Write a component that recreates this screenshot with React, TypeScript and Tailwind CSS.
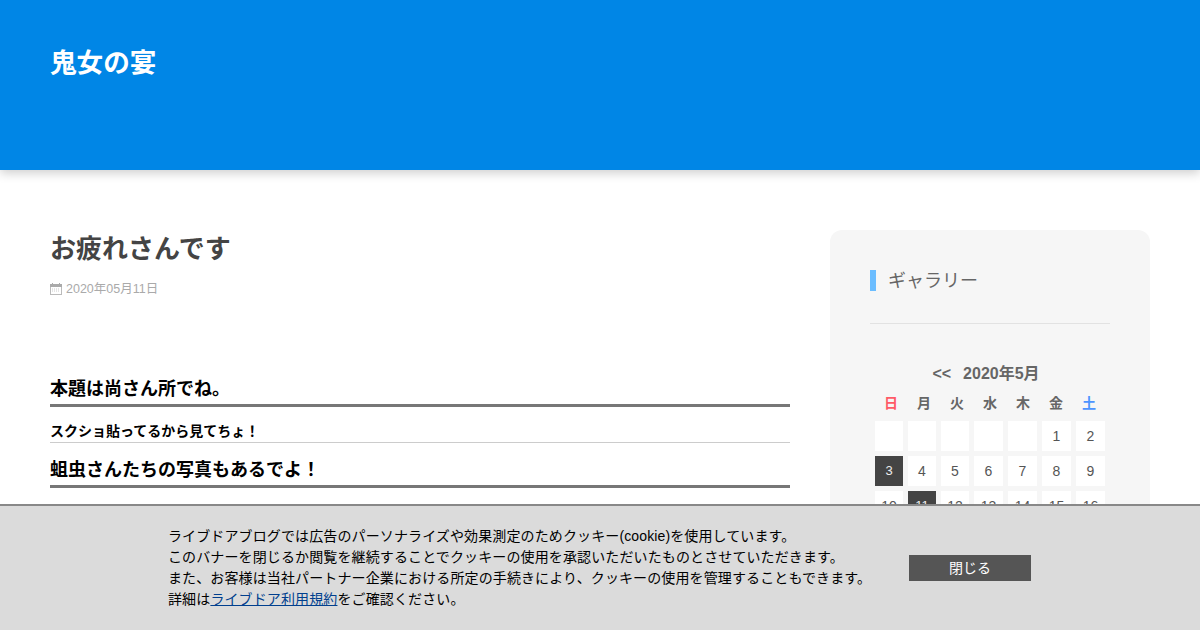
import React from 'react';

const weekdays = ['日', '月', '火', '水', '木', '金', '土'];
const days: (number | null)[] = [null, null, null, null, null, 1, 2, 3, 4, 5, 6, 7, 8, 9, 10, 11, 12, 13, 14, 15, 16];
const linkedDays = [3, 11];

const CalendarIcon = () => (
  <svg width="12" height="12" viewBox="0 0 12 12" className="shrink-0">
    <rect x="0.5" y="1.5" width="11" height="10" fill="none" stroke="#bbb" />
    <rect x="0" y="1" width="12" height="3" fill="#aaa" />
    <rect x="2" y="0" width="1" height="2" fill="#aaa" />
    <rect x="9" y="0" width="1" height="2" fill="#aaa" />
    <path d="M2 6h8M2 8h8" stroke="#ccc" strokeDasharray="1 1" />
  </svg>
);

const App: React.FC = () => {
  return (
    <div className="h-[630px] overflow-hidden bg-white font-['Liberation_Sans','Noto_Sans_CJK_JP',sans-serif] text-[#444]">
      <header className="h-[170px] bg-[#0086e6] px-[50px] pt-[45px] shadow-[0_3px_10px_rgba(0,0,0,0.2)]">
        <h1 className="text-[26.6px] leading-[36px] font-bold text-white">鬼女の宴</h1>
      </header>

      <div className="flex justify-between px-[50px] pt-[60px]">
        <main className="w-[740px] pt-px">
          <h2 className="text-[26px] leading-[36px] font-bold text-[#444]">お疲れさんです</h2>
          <div className="mt-[13px] flex items-center gap-[4px] text-[12.5px] leading-[18px] text-[#aaa]">
            <CalendarIcon />
            <span>2020年05月11日</span>
          </div>

          <div className="mt-[76px] text-black">
            <h3 className="border-b-[3px] border-[#777] text-[18px] leading-[30px] font-bold">本題は尚さん所でね。</h3>
            <h4 className="mt-[13px] border-b border-[#ccc] text-[14px] leading-[22px] font-bold">スクショ貼ってるから見てちょ！</h4>
            <h3 className="mt-[13px] border-b-[3px] border-[#777] text-[18px] leading-[29px] font-bold">蛆虫さんたちの写真もあるでよ！</h3>
          </div>
        </main>

        <aside className="w-[320px] rounded-[12px] bg-[#f6f6f6] px-[40px] pt-[40px] pb-[40px]">
          <h2 className="h-[21px] border-l-[6px] border-[#6bbdff] pt-px pl-[12px] text-[18px] leading-[21px] font-normal text-[#666]">ギャラリー</h2>
          <div className="mt-[32px] h-px bg-[#e2e2e2]" />

          <div className="mt-[39px] px-[5px]">
            <div className="flex justify-center gap-[12px] pr-[8px] text-[16px] leading-[22px] font-bold text-[#666]">
              <span>&lt;&lt;</span>
              <span>2020年5月</span>
            </div>
            <div className="mt-[8px] grid grid-cols-[repeat(7,33px)] justify-center text-center text-[14px] leading-[20px] font-bold text-[#666]">
              {weekdays.map((day, i) => (
                <div key={day} className={i === 0 ? 'text-[#ff5a66]' : i === 6 ? 'text-[#4d94ff]' : ''}>
                  {day}
                </div>
              ))}
            </div>
            <div className="mt-[8px] grid grid-cols-[28px_28px_28px_29px_29px_29px_29px] gap-[5px] text-center text-[14px] leading-[30px] text-[#555]">
              {days.map((d, i) => (
                <div
                  key={i}
                  className={d !== null && linkedDays.includes(d) ? 'h-[30px] bg-[#444] text-[13px] text-[#eee]' : 'h-[30px] bg-white'}
                >
                  {d}
                </div>
              ))}
            </div>
          </div>
        </aside>
      </div>

      <div className="fixed right-0 bottom-0 left-0 flex h-[126px] border-t-2 border-[#888] bg-[#dbdbdb] pl-[168px] text-black">
        <p className="mt-[20px] w-[711px] text-[14px] leading-[21px] tracking-[0.12px]">
          ライブドアブログでは広告のパーソナライズや効果測定のためクッキー(cookie)を使用しています。
          <br />
          このバナーを閉じるか閲覧を継続することでクッキーの使用を承認いただいたものとさせていただきます。
          <br />
          また、お客様は当社パートナー企業における所定の手続きにより、クッキーの使用を管理することもできます。
          <br />
          詳細は
          <a className="text-[#003f8e] underline">ライブドア利用規約</a>
          をご確認ください。
        </p>
        <button className="mt-[49px] ml-[30px] h-[26px] w-[122px] bg-[#555] text-[14px] text-white">閉じる</button>
      </div>
    </div>
  );
};

export default App;
